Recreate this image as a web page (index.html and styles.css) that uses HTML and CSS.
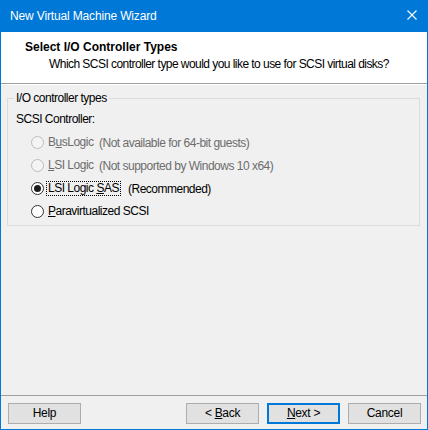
FILE: index.html
```html
<!DOCTYPE html>
<html>
<head>
<meta charset="utf-8">
<title>New Virtual Machine Wizard</title>
<link rel="stylesheet" href="styles.css">
</head>
<body>
<div class="window">
  <div class="titlebar">
    <span class="title">New Virtual Machine Wizard</span>
    <svg class="close" width="10" height="10" viewBox="0 0 10 10"><path d="M0.5 0.5L9.5 9.5M9.5 0.5L0.5 9.5" stroke="#fff" stroke-width="1.1" fill="none"/></svg>
  </div>
  <div class="header">
    <div class="h-title">Select I/O Controller Types</div>
    <div class="h-sub">Which SCSI controller type would you like to use for SCSI virtual disks?</div>
  </div>
  <div class="body">
    <fieldset class="group">
      <legend>I/O controller types</legend>
      <div class="caption">SCSI Controller:</div>
      <div class="rows">
        <div class="row disabled">
          <div class="radio w-short"><span class="circle"></span><span class="lbl">B<u>u</u>sLogic</span></div>
          <span class="desc">(Not available for 64-bit guests)</span>
        </div>
        <div class="row disabled">
          <div class="radio w-short"><span class="circle"></span><span class="lbl"><u>L</u>SI Logic</span></div>
          <span class="desc">(Not supported by Windows 10 x64)</span>
        </div>
        <div class="row">
          <div class="radio w-long"><span class="circle checked"></span><span class="lbl focus">LSI Logic <u>S</u>AS</span></div>
          <span class="desc">(Recommended)</span>
        </div>
        <div class="row">
          <div class="radio"><span class="circle"></span><span class="lbl"><u>P</u>aravirtualized SCSI</span></div>
        </div>
      </div>
    </fieldset>
  </div>
  <div class="footer">
    <button class="btn">Help</button>
    <div class="spacer"></div>
    <button class="btn">&lt; <u>B</u>ack</button>
    <button class="btn default"><u>N</u>ext &gt;</button>
    <button class="btn">Cancel</button>
  </div>
</div>
</body>
</html>
```
FILE: styles.css
```css
html, body { margin: 0; padding: 0; }
body {
  width: 428px;
  height: 430px;
  overflow: hidden;
  font-family: "Liberation Sans", Arial, sans-serif;
  font-size: 12px;
  color: #000;
  background: #f0f0f0;
}
.window {
  box-sizing: border-box;
  width: 428px;
  height: 430px;
  border: 1px solid #0078d7;
  border-top: 0;
  display: flex;
  flex-direction: column;
  background: #f0f0f0;
}
.titlebar {
  height: 31px;
  margin: 0 -1px;
  background: #0078d7;
  display: flex;
  align-items: center;
  padding: 0 11px 1px 10px;
  color: #fff;
  flex: none;
}
.title {
  flex: 1;
  letter-spacing: -0.15px;
  line-height: 16px;
}
.close { display: block; margin-top: -1px; }

.header {
  background: #fff;
  border-bottom: 1px solid #a0a0a0;
  box-shadow: 0 1px 0 #fff;
  flex: none;
  padding-top: 7px;
  box-sizing: border-box;
  height: 52px;
}
.h-title {
  font-weight: bold;
  padding-left: 24px;
  line-height: 16px;
}
.h-sub {
  padding-left: 48px;
  margin-top: 1px;
  line-height: 16px;
  letter-spacing: -0.55px;
}

.body {
  flex: 1;
  padding: 6px 7px 0 6px;
}
.group {
  margin: 0;
  padding: 0 5px 2px 6px;
  border: 1px solid #dcdcdc;
  min-width: 0;
}
.group legend {
  padding: 0 2px;
  line-height: 16px;
  letter-spacing: -0.5px;
}
.caption {
  margin-top: 5px;
  padding-left: 2px;
  line-height: 16px;
  letter-spacing: -0.5px;
}
.rows {
  margin-top: 4px;
  padding-left: 17px;
}
.row {
  height: 23px;
  display: flex;
  align-items: center;
  letter-spacing: -0.5px;
}
.radio {
  display: flex;
  align-items: center;
  flex: none;
}
.w-short { width: 68px; }
.w-long { width: 97px; }
.circle {
  box-sizing: border-box;
  width: 13px;
  height: 13px;
  border-radius: 50%;
  border: 1px solid #333;
  background: #fff;
  flex: none;
  position: relative;
}
.circle.checked::after {
  content: "";
  position: absolute;
  left: 2px;
  top: 2px;
  width: 7px;
  height: 7px;
  border-radius: 50%;
  background: #1a1a1a;
}
.lbl {
  margin-left: 3px;
  line-height: 13px;
  padding: 0 1px;
}
.lbl.focus {
  outline: 1px dotted #000;
  outline-offset: 0;
}
.disabled { color: #6d6d6d; }
.disabled .circle { border-color: #bcbcbc; background: #f4f4f4; }

.footer {
  flex: none;
  height: 34px;
  border-top: 1px solid #a0a0a0;
  display: flex;
  align-items: flex-start;
  padding: 7px 6px 0 7px;
  box-sizing: border-box;
  gap: 8px;
}
.spacer { flex: 1; }
.btn {
  box-sizing: border-box;
  width: 73px;
  height: 21px;
  margin: 0;
  padding: 0;
  background: #e1e1e1;
  border: 1px solid #adadad;
  border-radius: 0;
  font-family: "Liberation Sans", Arial, sans-serif;
  font-size: 12px;
  letter-spacing: -0.3px;
  color: #000;
  line-height: 17px;
}
.btn.default {
  border: 2px solid #0078d7;
}
```
